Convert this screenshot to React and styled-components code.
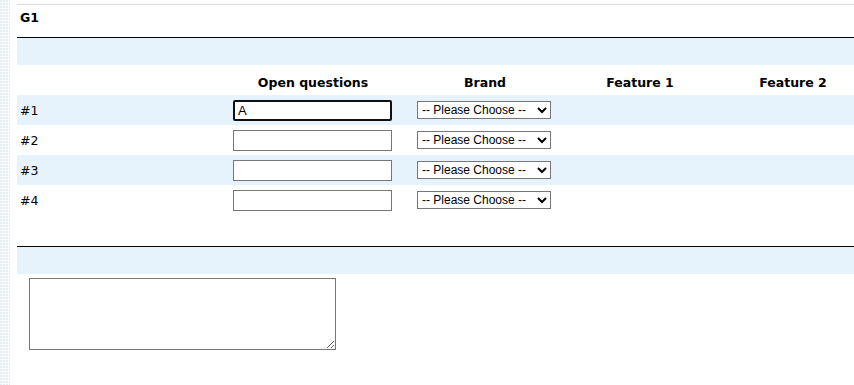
import React from 'react';
import styled, { createGlobalStyle } from 'styled-components';

const GlobalStyle = createGlobalStyle`
  html, body {
    margin: 0;
    padding: 0;
  }
  body {
    background-color: #ffffff;
    background-image:
      linear-gradient(90deg, transparent 2px, #fff 2px),
      linear-gradient(0deg, #fff 1px, #e2edf8 1px);
    background-size: 3px 3px;
    font-family: "DejaVu Sans", Verdana, sans-serif;
    color: #000;
  }
`;

const Page = styled.div`
  margin-left: 10px;
  background: #fff;
  min-height: 385px;
  padding: 4px 0 0 7px;
  box-sizing: border-box;
  overflow: hidden;
`;

const Title = styled.div`
  border-top: 1px solid #dcdcdc;
  padding: 5px 3px 0;
  height: 34px;
  box-sizing: border-box;
  font-size: 12.5px;
  font-weight: bold;
  border-bottom: 1px solid #000;
`;

const Band = styled.div`
  height: 27px;
  background: #e6f3fc;
`;

const Grid = styled.div`
  display: grid;
  grid-template-columns: 214px 164px 180px 130px 1fr;
  grid-auto-rows: 30px;
  font-size: 12.5px;
`;

const Cell = styled.div`
  display: flex;
  align-items: center;
  justify-content: ${p => (p.$center ? 'center' : 'flex-start')};
  background: ${p => (p.$shade ? '#e6f3fc' : 'transparent')};
  padding-left: ${p => p.$pl || 0}px;
`;

const Head = styled(Cell)`
  font-weight: bold;
  padding-top: 4px;
  box-sizing: border-box;
`;

const Label = styled(Cell)`
  padding-left: 3px;
`;

const TextInput = styled.input`
  box-sizing: border-box;
  width: 159px;
  height: 21px;
  margin-left: 2px;
  padding: 1px 3px;
  border: ${p => (p.$focus ? '2px solid #101010' : '1px solid #767676')};
  border-radius: ${p => (p.$focus ? '2px' : '0')};
  font-family: "Liberation Sans", Arial, sans-serif;
  font-size: 13px;
  outline: none;
  background: #fff;
`;

const Choose = styled.select`
  box-sizing: border-box;
  width: 134px;
  height: 18px;
  padding: 0;
  border: 1px solid #767676;
  border-radius: 0;
  font-family: "Liberation Sans", Arial, sans-serif;
  font-size: 12px;
  background: #fff;
  color: #000;
`;

const Spacer = styled.div`
  height: ${p => p.$h}px;
`;

const Rule = styled.div`
  border-top: 1px solid #000;
`;

const Notes = styled.textarea`
  box-sizing: border-box;
  display: block;
  width: 307px;
  height: 72px;
  margin: 4px 0 0 12px;
  border: 1px solid #767676;
  font-family: "Liberation Mono", monospace;
  font-size: 13px;
`;

const rows = ['#1', '#2', '#3', '#4'];

export default function App() {
  return (
    <Page>
      <GlobalStyle />
      <Title>G1</Title>
      <Band />
      <Grid>
        <Head />
        <Head $center>Open questions</Head>
        <Head $center>Brand</Head>
        <Head $center>Feature 1</Head>
        <Head $center $pl={27}>Feature 2</Head>
        {rows.map((r, i) => {
          const shade = i % 2 === 0;
          return (
            <React.Fragment key={r}>
              <Label $shade={shade}>{r}</Label>
              <Cell $shade={shade}>
                <TextInput $focus={i === 0} defaultValue={i === 0 ? 'A' : ''} />
              </Cell>
              <Cell $shade={shade} $pl={22}>
                <Choose defaultValue="">
                  <option value="">-- Please Choose --</option>
                </Choose>
              </Cell>
              <Cell $shade={shade} />
              <Cell $shade={shade} />
            </React.Fragment>
          );
        })}
      </Grid>
      <Spacer $h={31} />
      <Rule />
      <Band />
      <Notes />
    </Page>
  );
}
